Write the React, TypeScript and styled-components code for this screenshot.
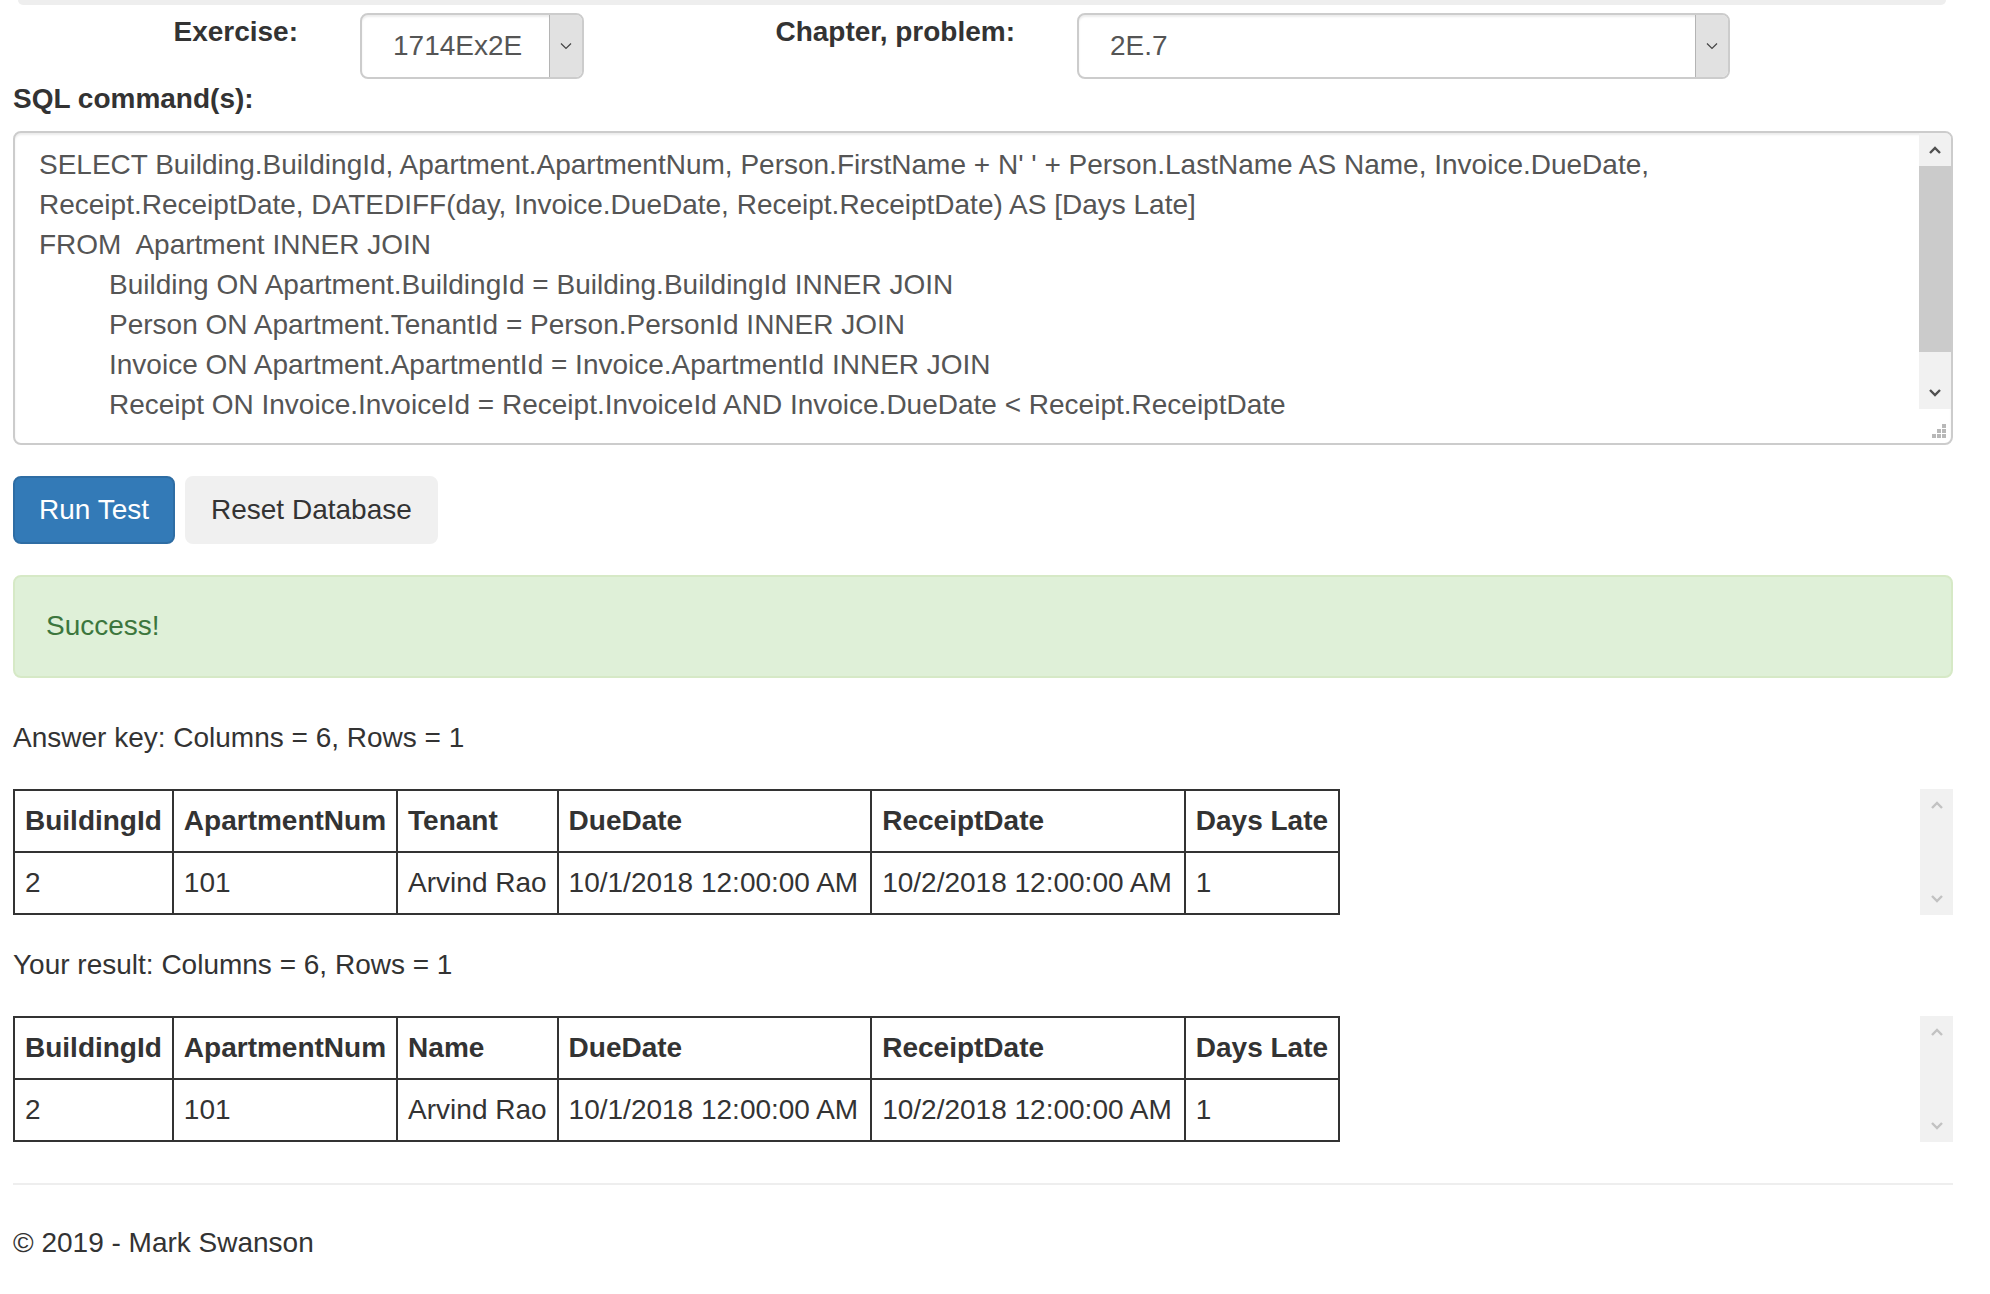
import React from 'react';
import styled, { createGlobalStyle } from 'styled-components';

const GlobalStyle = createGlobalStyle`
  html, body {
    margin: 0;
    padding: 0;
    background: #fff;
  }
  body {
    font-family: "Liberation Sans", Arial, Helvetica, sans-serif;
    font-size: 28px;
    line-height: 40px;
    color: #333;
  }
  * {
    box-sizing: border-box;
  }
`;

const Page = styled.div`
  width: 1990px;
  padding: 0 37px 40px 13px;
`;

const TopStrip = styled.div`
  height: 5px;
  margin: 0 7px 0 5px;
  background: #eee;
  border-radius: 0 0 12px 12px;
`;

const FormRow = styled.div`
  display: flex;
  align-items: flex-start;
  margin-top: 8px;
`;

const FieldLabel = styled.label<{ $width: number }>`
  width: ${(p) => p.$width}px;
  margin-right: 62px;
  margin-top: -1px;
  text-align: right;
  font-weight: bold;
  line-height: 40px;
  flex: none;
`;

const SelectBox = styled.div<{ $width: number }>`
  width: ${(p) => p.$width}px;
  height: 66px;
  flex: none;
  display: flex;
  border: 2px solid #ccc;
  border-radius: 8px;
  background: #fff;
  box-shadow: inset 0 2px 2px rgba(0, 0, 0, 0.075);
  overflow: hidden;
`;

const SelectValue = styled.div`
  flex: 1;
  padding-left: 31px;
  line-height: 62px;
  color: #555;
  white-space: nowrap;
`;

const SelectArrow = styled.div`
  width: 33px;
  flex: none;
  display: flex;
  align-items: center;
  justify-content: center;
  background: #e1e1e1;
  border-left: 1px solid #b4b4b4;
`;

const SqlLabel = styled.div`
  font-weight: bold;
  margin-bottom: 12px;
`;

const Editor = styled.div`
  position: relative;
  display: flex;
  height: 314px;
  border: 2px solid #ccc;
  border-radius: 8px;
  box-shadow: inset 0 2px 2px rgba(0, 0, 0, 0.075);
  overflow: hidden;
`;

const EditorText = styled.div`
  flex: 1;
  padding: 12px 24px;
  color: #555;
`;

const CodeLine = styled.div<{ $indent?: boolean }>`
  white-space: pre;
  padding-left: ${(p) => (p.$indent ? 70 : 0)}px;
`;

const EditorSide = styled.div`
  width: 32px;
  flex: none;
  display: flex;
  flex-direction: column;
`;

const Scrollbar = styled.div<{ $height: number }>`
  height: ${(p) => p.$height}px;
  display: flex;
  flex-direction: column;
  background: #f1f1f1;
`;

const ScrollButton = styled.div`
  height: 33px;
  flex: none;
  display: flex;
  align-items: center;
  justify-content: center;
`;

const Thumb = styled.div`
  height: 186px;
  flex: none;
  background: #cbcbcb;
`;

const Track = styled.div`
  flex: 1;
`;

const Grip = styled.div`
  position: absolute;
  right: 5px;
  bottom: 5px;
  line-height: 0;
`;

const ButtonRow = styled.div`
  display: flex;
  gap: 10px;
  margin-top: 31px;
`;

const Button = styled.button<{ $primary?: boolean }>`
  height: 68px;
  padding: 0 24px;
  font-family: inherit;
  font-size: 28px;
  line-height: 40px;
  border-radius: 8px;
  border: 2px solid ${(p) => (p.$primary ? '#2e6da4' : '#f0f0f0')};
  background: ${(p) => (p.$primary ? '#337ab7' : '#f0f0f0')};
  color: ${(p) => (p.$primary ? '#fff' : '#333')};
  cursor: pointer;
`;

const Alert = styled.div`
  margin-top: 31px;
  margin-bottom: 40px;
  padding: 29px 31px 30px;
  background: #dff0d8;
  border: 2px solid #d6e9c6;
  border-radius: 8px;
  color: #3c763d;
`;

const ResultLabel = styled.div<{ $top?: number }>`
  margin-top: ${(p) => p.$top ?? 0}px;
  margin-bottom: 31px;
`;

const TableWrap = styled.div`
  display: flex;
  justify-content: space-between;
  align-items: stretch;
`;

const Table = styled.table`
  border-collapse: collapse;
`;

const Th = styled.th`
  border: 2px solid #333;
  padding: 10px;
  text-align: left;
  font-weight: bold;
  white-space: nowrap;
`;

const Td = styled.td<{ $wide?: boolean }>`
  border: 2px solid #333;
  padding: 10px ${(p) => (p.$wide ? 12 : 10)}px 10px 10px;
  white-space: nowrap;
`;

const SideScroll = styled.div`
  width: 33px;
  flex: none;
  display: flex;
  flex-direction: column;
  justify-content: space-between;
  background: #f1f1f1;
  padding: 12px 0;
  align-items: center;
`;

const Rule = styled.hr`
  margin: 41px 0 38px;
  border: 0;
  border-top: 2px solid #eee;
`;

const Footer = styled.footer``;

const Chevron = ({ up, color, w = 12 }: { up?: boolean; color: string; w?: number }) => (
  <svg width={w} height={8} viewBox="0 0 12 8">
    <polyline
      points={up ? '1,7 6,2 11,7' : '1,1 6,6 11,1'}
      fill="none"
      stroke={color}
      strokeWidth={2.4}
    />
  </svg>
);

const SelectChevron = () => (
  <svg width={12} height={8} viewBox="0 0 12 8">
    <polyline points="1,1.5 6,6.5 11,1.5" fill="none" stroke="#444" strokeWidth={1.2} />
  </svg>
);

const GripIcon = () => (
  <svg width={14} height={14} viewBox="0 0 14 14" fill="#b8b8b8">
    <rect x={10} y={0} width={4} height={4} />
    <rect x={5} y={5} width={4} height={4} />
    <rect x={10} y={5} width={4} height={4} />
    <rect x={0} y={10} width={4} height={4} />
    <rect x={5} y={10} width={4} height={4} />
    <rect x={10} y={10} width={4} height={4} />
  </svg>
);

type Row = string[];

// date columns sit a little wider in the original
const wideCols = new Set([3, 4]);

const ResultTable = ({ headers, rows }: { headers: string[]; rows: Row[] }) => (
  <TableWrap>
    <Table>
      <thead>
        <tr>
          {headers.map((h) => (
            <Th key={h}>{h}</Th>
          ))}
        </tr>
      </thead>
      <tbody>
        {rows.map((r, i) => (
          <tr key={i}>
            {r.map((c, j) => (
              <Td key={j} $wide={wideCols.has(j)}>
                {c}
              </Td>
            ))}
          </tr>
        ))}
      </tbody>
    </Table>
    <SideScroll>
      <Chevron up color="#c2c2c2" />
      <Chevron color="#c2c2c2" />
    </SideScroll>
  </TableWrap>
);

const sqlLines: { text: string; indent?: boolean }[] = [
  { text: "SELECT Building.BuildingId, Apartment.ApartmentNum, Person.FirstName + N' ' + Person.LastName AS Name, Invoice.DueDate," },
  { text: 'Receipt.ReceiptDate, DATEDIFF(day, Invoice.DueDate, Receipt.ReceiptDate) AS [Days Late]' },
  { text: 'FROM  Apartment INNER JOIN' },
  { text: 'Building ON Apartment.BuildingId = Building.BuildingId INNER JOIN', indent: true },
  { text: 'Person ON Apartment.TenantId = Person.PersonId INNER JOIN', indent: true },
  { text: 'Invoice ON Apartment.ApartmentId = Invoice.ApartmentId INNER JOIN', indent: true },
  { text: 'Receipt ON Invoice.InvoiceId = Receipt.InvoiceId AND Invoice.DueDate < Receipt.ReceiptDate', indent: true },
];

const dataRow: Row = ['2', '101', 'Arvind Rao', '10/1/2018 12:00:00 AM', '10/2/2018 12:00:00 AM', '1'];

const App: React.FC = () => {
  return (
    <>
      <GlobalStyle />
      <Page>
        <TopStrip />
        <FormRow>
          <FieldLabel $width={285}>Exercise:</FieldLabel>
          <SelectBox $width={224}>
            <SelectValue>1714Ex2E</SelectValue>
            <SelectArrow>
              <SelectChevron />
            </SelectArrow>
          </SelectBox>
          <FieldLabel $width={431}>Chapter, problem:</FieldLabel>
          <SelectBox $width={653}>
            <SelectValue>2E.7</SelectValue>
            <SelectArrow>
              <SelectChevron />
            </SelectArrow>
          </SelectBox>
        </FormRow>

        <SqlLabel>SQL command(s):</SqlLabel>
        <Editor>
          <EditorText>
            {sqlLines.map((l, i) => (
              <CodeLine key={i} $indent={l.indent}>
                {l.text}
              </CodeLine>
            ))}
          </EditorText>
          <EditorSide>
            <Scrollbar $height={276}>
              <ScrollButton>
                <Chevron up color="#505050" />
              </ScrollButton>
              <Thumb />
              <Track />
              <ScrollButton>
                <Chevron color="#505050" />
              </ScrollButton>
            </Scrollbar>
          </EditorSide>
          <Grip>
            <GripIcon />
          </Grip>
        </Editor>

        <ButtonRow>
          <Button $primary>Run Test</Button>
          <Button>Reset Database</Button>
        </ButtonRow>

        <Alert>Success!</Alert>

        <ResultLabel>Answer key: Columns = 6, Rows = 1</ResultLabel>
        <ResultTable
          headers={['BuildingId', 'ApartmentNum', 'Tenant', 'DueDate', 'ReceiptDate', 'Days Late']}
          rows={[dataRow]}
        />

        <ResultLabel $top={30}>Your result: Columns = 6, Rows = 1</ResultLabel>
        <ResultTable
          headers={['BuildingId', 'ApartmentNum', 'Name', 'DueDate', 'ReceiptDate', 'Days Late']}
          rows={[dataRow]}
        />

        <Rule />
        <Footer>&copy; 2019 - Mark Swanson</Footer>
      </Page>
    </>
  );
};

export default App;
